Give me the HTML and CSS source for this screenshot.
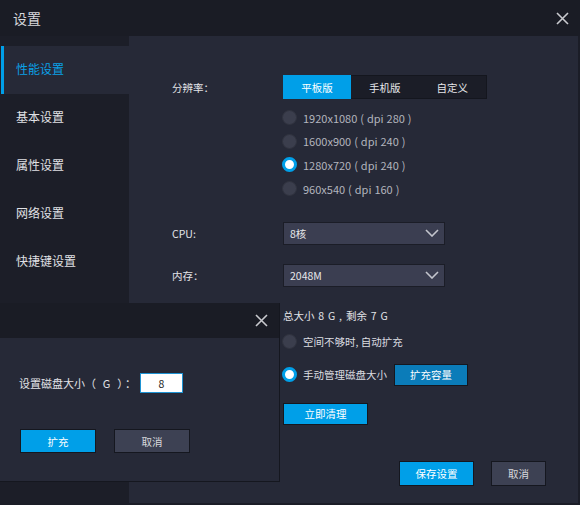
FILE: index.html
```html
<!DOCTYPE html>
<html lang="zh-CN">
<head>
<meta charset="utf-8">
<title>设置</title>
<link rel="stylesheet" href="styles.css">
</head>
<body>
<div class="window">
  <header class="titlebar">
    <span class="title">设置</span>
    <svg class="close" width="13" height="13" viewBox="0 0 13 13"><path d="M1 1L12 12M12 1L1 12" stroke="#c9cacf" stroke-width="1.6" fill="none"/></svg>
  </header>
  <div class="main">
    <nav class="sidebar">
      <div class="nav-item active">性能设置</div>
      <div class="nav-item">基本设置</div>
      <div class="nav-item">属性设置</div>
      <div class="nav-item">网络设置</div>
      <div class="nav-item">快捷键设置</div>
    </nav>
    <section class="content">
      <div class="row row-res">
        <div class="label">分辨率：</div>
        <div class="seg">
          <span class="seg-item on">平板版</span>
          <span class="seg-item">手机版</span>
          <span class="seg-item">自定义</span>
        </div>
      </div>
      <div class="row">
        <div class="label"></div>
        <div class="radios">
          <div class="radio-row"><span class="radio"></span><span class="rtext">1920x1080 ( dpi 280 )</span></div>
          <div class="radio-row"><span class="radio"></span><span class="rtext">1600x900 ( dpi 240 )</span></div>
          <div class="radio-row"><span class="radio checked"></span><span class="rtext">1280x720 ( dpi 240 )</span></div>
          <div class="radio-row"><span class="radio"></span><span class="rtext">960x540 ( dpi 160 )</span></div>
        </div>
      </div>
      <div class="row row-cpu">
        <div class="label">CPU:</div>
        <div class="select"><span>8核</span><svg width="14" height="8" viewBox="0 0 14 8"><path d="M1 1L7 7L13 1" stroke="#c3c5cd" stroke-width="1.6" fill="none"/></svg></div>
      </div>
      <div class="row row-mem">
        <div class="label">内存：</div>
        <div class="select"><span>2048M</span><svg width="14" height="8" viewBox="0 0 14 8"><path d="M1 1L7 7L13 1" stroke="#c3c5cd" stroke-width="1.6" fill="none"/></svg></div>
      </div>
      <div class="row row-disk">
        <div class="label"></div>
        <div class="disk">
          <div class="disk-info">总大小 8 G , 剩余 7 G</div>
          <div class="radio-row r-auto"><span class="radio"></span><span class="dtext">空间不够时, 自动扩充</span></div>
          <div class="radio-row r-manual"><span class="radio checked"></span><span class="dtext">手动管理磁盘大小</span><span class="btn btn-dark">扩充容量</span></div>
          <span class="btn btn-blue btn-clean">立即清理</span>
        </div>
      </div>
      <div class="footer">
        <span class="btn btn-blue btn-save">保存设置</span>
        <span class="btn btn-gray btn-cancel">取消</span>
      </div>
    </section>
  </div>
  <div class="modal">
    <div class="modal-head">
      <svg class="close" width="13" height="13" viewBox="0 0 13 13"><path d="M1 1L12 12M12 1L1 12" stroke="#c9cacf" stroke-width="1.6" fill="none"/></svg>
    </div>
    <div class="modal-body">
      <div class="size-row">
        <span class="size-label">设置磁盘大小<span class="unit">（ G ）：</span></span>
        <span class="input">8</span>
      </div>
      <div class="modal-btns">
        <span class="btn btn-blue mbtn">扩充</span>
        <span class="btn btn-gray mbtn">取消</span>
      </div>
    </div>
  </div>
</div>
</body>
</html>
```
FILE: styles.css
```css
* { box-sizing: border-box; }
html, body { margin: 0; padding: 0; }
body {
  width: 580px;
  height: 505px;
  background: #1b1d27;
  font-family: "Noto Sans CJK SC", "Noto Sans", sans-serif;
  font-size: 10.5px;
  color: #e2e3e7;
  overflow: hidden;
}
.window {
  position: relative;
  width: 580px;
  height: 505px;
  display: flex;
  flex-direction: column;
}
.titlebar {
  height: 36px;
  flex: none;
  background: #1a1c25;
  display: flex;
  align-items: center;
  justify-content: space-between;
  padding: 0 11px 0 13px;
}
.title { font-size: 14px; color: #d6d7db; }
.main {
  flex: 1;
  display: flex;
  padding: 0 2px 2px 0;
}
.sidebar {
  width: 129px;
  flex: none;
  background: #1c1e28;
  padding-top: 10px;
}
.nav-item {
  height: 48px;
  margin-left: 1px;
  padding-left: 15px;
  padding-bottom: 3px;
  display: flex;
  align-items: center;
  font-size: 12px;
  color: #e0e1e5;
}
.nav-item.active {
  background: #262937;
  border-left: 3px solid #009fe8;
  padding-left: 12px;
  color: #0aa0e6;
}
.content {
  flex: 1;
  background: #262937;
  padding: 39px 32px 0 43px;
  display: flex;
  flex-direction: column;
}
.row { display: flex; }
.label {
  width: 111px;
  flex: none;
  display: flex;
  align-items: center;
  color: #e2e3e7;
}
.seg {
  display: flex;
  width: 204px;
  height: 24px;
  border: 1px solid #14161e;
  background: #1b1d27;
}
.seg-item {
  flex: 1;
  display: flex;
  align-items: center;
  justify-content: center;
  color: #e6e7ea;
}
.seg-item.on {
  flex: none;
  background: #009fe8;
  color: #fff;
  margin: -1px 0 -1px -1px;
  width: 68px;
}
.radios { padding-top: 7px; }
.radio-row {
  display: flex;
  align-items: center;
  height: 23.6px;
}
.radio {
  width: 15px;
  height: 15px;
  border-radius: 50%;
  background: #3b3e4d;
  border: 1px solid #30333f;
  flex: none;
  margin-left: -1px;
  margin-right: 6px;
}
.radio.checked {
  background: #fff;
  border: 3.5px solid #009fe8;
}
.rtext { color: #b3b5be; font-size: 11px; word-spacing: 0.5px; }
.row-cpu { margin-top: 21.6px; }
.row-mem { margin-top: 19px; }
.select {
  width: 162px;
  height: 23px;
  background: #3b3e51;
  border: 1px solid #1b1d27;
  display: flex;
  align-items: center;
  justify-content: space-between;
  padding: 0 5px 0 6px;
  color: #e6e7ea;
}
.row-disk { margin-top: 21px; }
.disk { display: flex; flex-direction: column; align-items: flex-start; }
.disk-info { height: 16px; line-height: 16px; color: #e2e3e7; word-spacing: 1.5px; }
.r-auto { height: 24px; margin-top: 6px; }
.r-manual { height: 22px; margin-top: 10px; }
.dtext { color: #dcdde1; }
.btn {
  display: inline-flex;
  align-items: center;
  justify-content: center;
  color: #fff;
  font-size: 10.5px;
  border: 1px solid #15171f;
}
.btn-blue { background: #009fe8; }
.btn-dark { background: #0b7cb9; }
.btn-gray { background: #3d4153; color: #d8d9dd; }
.r-manual .btn-dark { width: 74px; height: 22px; margin-left: 7px; }
.btn-clean { width: 85px; height: 22px; margin-top: 17px; }
.footer {
  margin-top: 36px;
  display: flex;
  justify-content: flex-end;
  gap: 17px;
}
.btn-save { width: 75px; height: 25px; }
.btn-cancel { width: 55px; height: 25px; }
.modal {
  position: absolute;
  left: 0;
  top: 303px;
  width: 280px;
  height: 179px;
  background: #262937;
  border-right: 1px solid #15171f;
  border-bottom: 1px solid #15171f;
  display: flex;
  flex-direction: column;
}
.modal-head {
  height: 35px;
  flex: none;
  background: #1a1c25;
  display: flex;
  align-items: center;
  justify-content: flex-end;
  padding-right: 11px;
}
.modal-body { padding: 35px 0 0 19px; }
.size-row { display: flex; align-items: center; height: 20px; }
.size-label { width: 121px; font-size: 11px; color: #e2e3e7; white-space: nowrap; }
.unit { letter-spacing: 2.2px; }
.input {
  width: 43px;
  height: 20px;
  background: #fff;
  border: 1px solid #1e93d3;
  color: #222;
  display: flex;
  align-items: center;
  justify-content: center;
}
.modal-btns { display: flex; gap: 18px; margin-top: 36px; padding-left: 1px; }
.mbtn { width: 76px; height: 24px; }
```
